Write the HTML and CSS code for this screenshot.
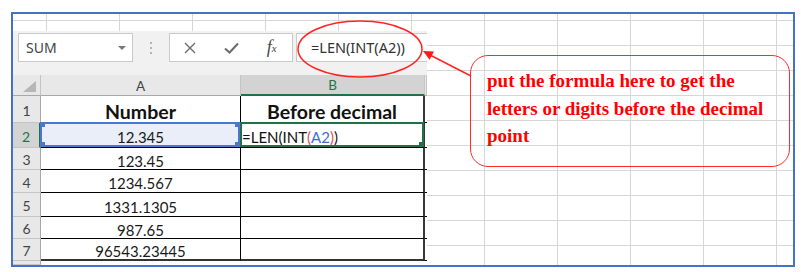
FILE: index.html
```html
<!DOCTYPE html>
<html lang="en">
<head>
  <meta charset="UTF-8">
  <title>LEN(INT()) example</title>
  <link rel="stylesheet" href="styles.css">
</head>
<body>
  <div class="shot">
    <div class="excel">
      <div class="formula-bar">
        <div class="name-box"><span>SUM</span><span class="caret"></span></div>
        <div class="grip"><span></span></div>
        <div class="fx-buttons">
          <span><svg width="12" height="12" viewBox="0 0 12 12"><path d="M1 1L11 11M11 1L1 11" stroke="#6b6b6b" stroke-width="1.4"/></svg></span>
          <span><svg width="15" height="12" viewBox="0 0 15 12"><path d="M1 6.5L5.5 10.5L14 1.5" fill="none" stroke="#6b6b6b" stroke-width="2"/></svg></span>
          <span class="fx">f<sub>x</sub></span>
        </div>
        <div class="formula-input">=LEN(INT(A2))</div>
      </div>

      <div class="sheet">
        <div class="corner"></div><div class="hd">A</div><div class="hd active">B</div><div class="hd"></div>

        <div class="rh">1</div><div class="c title">Number</div><div class="c b title">Before decimal</div><div class="gap"></div>
        <div class="rh active">2</div><div class="c ref">12.345</div><div class="c b current">=LEN(INT<span class="p">(</span><span class="r">A2</span><span class="p">)</span>)</div><div class="gap"></div>
        <div class="rh">3</div><div class="c">123.45</div><div class="c b"></div><div class="gap"></div>
        <div class="rh">4</div><div class="c">1234.567</div><div class="c b"></div><div class="gap"></div>
        <div class="rh">5</div><div class="c">1331.1305</div><div class="c b"></div><div class="gap"></div>
        <div class="rh">6</div><div class="c">987.65</div><div class="c b"></div><div class="gap"></div>
        <div class="rh">7</div><div class="c last">96543.23445</div><div class="c b last"></div><div class="gap"></div>
        <div class="rh"></div><div class="fill"></div><div class="fill"></div><div class="fill"></div>
      </div>
    </div>

    <div class="callout">put the formula here to get the<br>letters or digits before the decimal<br>point</div>

    <!-- annotation drawn in page coordinates -->
    <svg class="annot" width="779" height="251" viewBox="13 14 779 251">
      <ellipse cx="360" cy="49" rx="62" ry="28" fill="none" stroke="#ff2323" stroke-width="1.5"/>
      <line x1="471" y1="76" x2="430" y2="55" stroke="#ff2323" stroke-width="1.5"/>
      <polygon points="423,51 434,51.4 429.6,59.8" fill="#ff1a1a"/>
    </svg>
  </div>
</body>
</html>
```

FILE: styles.css
```css
body {
  margin: 0;
  background: #fff;
  font-family: Lato, "Liberation Sans", sans-serif;
}
.shot {
  position: relative;
  display: flex;
  align-items: flex-start;
  box-sizing: border-box;
  width: 784px;
  height: 255px;
  margin: 12px 0 0 11px;
  border: 2px solid #4472c4;
  background-color: #fff;
  background-image:
    linear-gradient(to right, #d6d6d6 1px, transparent 1px),
    linear-gradient(to bottom, #d6d6d6 1px, transparent 1px);
  background-size: 73px 100%, 100% 25px;
  background-position: 33px 0, 0 6px;
}
.excel {
  display: flex;
  flex-direction: column;
  width: 414px;
  height: 234px;
  margin-top: 17px;
  background: #fff;
}

/* formula bar */
.formula-bar {
  display: flex;
  align-items: flex-start;
  box-sizing: border-box;
  height: 44px;
  padding-top: 2px;
  background: #f1f1f1;
  font-family: "Noto Sans", sans-serif;
}
.name-box {
  display: flex;
  align-items: center;
  justify-content: space-between;
  box-sizing: border-box;
  width: 115px;
  height: 29px;
  margin-left: 5px;
  padding: 0 6px 0 7px;
  border: 1px solid #cacaca;
  background: #fff;
  font-size: 14px;
  color: #444;
}
.caret {
  border-left: 4px solid transparent;
  border-right: 4px solid transparent;
  border-top: 4px solid #777;
}
.grip {
  display: flex;
  align-items: center;
  justify-content: center;
  width: 36px;
  height: 29px;
}
.grip span {
  width: 2px;
  height: 12px;
  background: repeating-linear-gradient(to bottom, #b3b3b3 0 2px, transparent 2px 5px);
}
.fx-buttons {
  display: flex;
  box-sizing: border-box;
  width: 124px;
  height: 29px;
  border: 1px solid #cacaca;
  background: #fff;
}
.fx-buttons > span {
  flex: 1;
  display: flex;
  align-items: center;
  justify-content: center;
}
.fx {
  font-family: "Liberation Serif", serif;
  font-style: italic;
  font-size: 18px;
  color: #4a4a4a;
}
.fx sub {
  font-size: 11px;
  vertical-align: -1px;
}
.formula-input {
  flex: 1;
  box-sizing: border-box;
  height: 29px;
  margin-left: 3px;
  padding-left: 14px;
  border: 1px solid #cacaca;
  border-right: 0;
  background: #fff;
  font-size: 14.5px;
  line-height: 27px;
  color: #333;
}

/* grid */
.sheet {
  display: grid;
  grid-template-columns: 28px 200px 184px 2px;
  grid-template-rows: 21px 27px 25px 22px 23px 24px 22px 22px 4px;
}
.sheet > div {
  box-sizing: border-box;
}
.corner {
  display: flex;
  justify-content: flex-end;
  align-items: flex-end;
  padding: 0 4px 3px 0;
  background: #e8e8e8;
  border-right: 1px solid #c4c4c4;
  border-bottom: 1px solid #a8a8a8;
}
.corner::after {
  content: '';
  border-left: 13px solid transparent;
  border-bottom: 11px solid #b6b6b6;
}
.hd {
  display: flex;
  align-items: center;
  justify-content: center;
  padding-top: 1px;
  background: #e8e8e8;
  border-right: 1px solid #c4c4c4;
  border-bottom: 1px solid #a8a8a8;
  font-size: 13.5px;
  color: #444;
}
.hd.active {
  background: #d3d3d3;
  border-bottom: 2px solid #217346;
  color: #217346;
}
.rh {
  display: flex;
  align-items: center;
  justify-content: center;
  padding-top: 2px;
  background: #e8e8e8;
  border-right: 1px solid #a8a8a8;
  border-bottom: 1px solid #c4c4c4;
  font-size: 14px;
  color: #444;
}
.rh.active {
  background: #d3d3d3;
  border-right: 2px solid #217346;
  color: #217346;
}
.c {
  position: relative;
  display: flex;
  align-items: center;
  justify-content: center;
  padding-top: 4px;
  border-right: 1px solid #000;
  border-bottom: 1px solid #000;
  font-size: 15px;
  color: #1a1a1a;
}
.c.b {
  border-right: 2px solid #383838;
}
.c.last {
  border-bottom: 2px solid #333;
}
.title {
  font-size: 19.5px;
  font-weight: 700;
  color: #111;
}
.gap {
  border-bottom: 1px solid #000;
}
.fill {
  background: #fff;
}
.ref {
  background: #e9eef8;
}
.ref::after {
  content: '';
  position: absolute;
  inset: -1px 0 0 -1px;
  border: 2px solid #4a78cf;
  background:
    linear-gradient(#4a78cf, #4a78cf) left top / 5px 5px no-repeat,
    linear-gradient(#4a78cf, #4a78cf) right top / 5px 5px no-repeat,
    linear-gradient(#4a78cf, #4a78cf) left bottom / 5px 5px no-repeat,
    linear-gradient(#4a78cf, #4a78cf) right bottom / 5px 5px no-repeat;
  background-origin: border-box;
}
.current {
  justify-content: flex-start;
  padding-left: 1px;
  color: #111;
}
.current::after {
  content: '';
  position: absolute;
  inset: -1px -1px 0 -1px;
  border: 2px solid #217346;
  background: linear-gradient(#217346, #217346) right bottom / 5px 5px no-repeat;
  background-origin: border-box;
}
.current .p { color: #e0496a; }
.current .r { color: #3f6fd1; }

/* annotation */
.callout {
  box-sizing: border-box;
  width: 320px;
  height: 112px;
  margin: 41px 0 0 43px;
  padding: 11px 0 0 16px;
  border: 1.5px solid #ff2a2a;
  border-radius: 18px;
  font-family: "Liberation Serif", serif;
  font-weight: 700;
  font-size: 19px;
  line-height: 27.5px;
  color: #ff0000;
}
.annot {
  position: absolute;
  left: 0;
  top: 0;
  pointer-events: none;
}
```
